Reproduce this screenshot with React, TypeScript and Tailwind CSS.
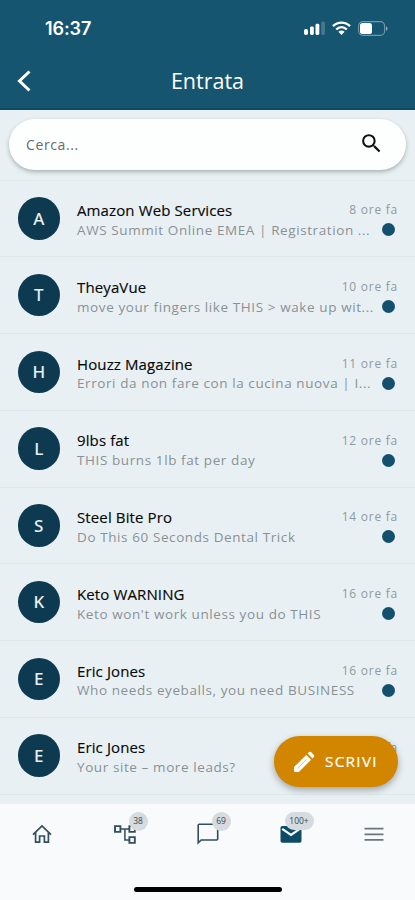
import { MdSearch } from "react-icons/md";

type Mail = {
  id: number;
  initial: string;
  sender: string;
  subject: string;
  time: string;
};

const mails: Mail[] = [
  { id: 1, initial: "A", sender: "Amazon Web Services", subject: "AWS Summit Online EMEA | Registration ...", time: "8 ore fa" },
  { id: 2, initial: "T", sender: "TheyaVue", subject: "move your fingers like THIS > wake up wit...", time: "10 ore fa" },
  { id: 3, initial: "H", sender: "Houzz Magazine", subject: "Errori da non fare con la cucina nuova | I...", time: "11 ore fa" },
  { id: 4, initial: "L", sender: "9lbs fat", subject: "THIS burns 1lb fat per day", time: "12 ore fa" },
  { id: 5, initial: "S", sender: "Steel Bite Pro", subject: "Do This 60 Seconds Dental Trick", time: "14 ore fa" },
  { id: 6, initial: "K", sender: "Keto WARNING", subject: "Keto won't work unless you do THIS", time: "16 ore fa" },
  { id: 7, initial: "E", sender: "Eric Jones", subject: "Who needs eyeballs, you need BUSINESS", time: "16 ore fa" },
  { id: 8, initial: "E", sender: "Eric Jones", subject: "Your site – more leads?", time: "16 ore fa" },
];

function StatusBar() {
  return (
    <div className="flex h-[56px] items-center justify-between pr-[27px] pl-[45px] text-white">
      <span className="font-['Inter',sans-serif] text-[18px] font-semibold tracking-[-0.1px]">16:37</span>
      <div className="flex items-center">
        <svg width="22" height="14" viewBox="0 0 22 14" fill="currentColor">
          <rect x="0" y="8" width="4" height="6" rx="1.8" />
          <rect x="6" y="5.5" width="3.8" height="8.5" rx="1.4" />
          <rect x="11.5" y="2.8" width="3.8" height="11.2" rx="1.4" />
          <rect x="17.2" y="0.5" width="3.8" height="13.5" rx="1.4" opacity="0.2" />
        </svg>
        <svg className="ml-[6px]" width="19" height="14" viewBox="0 0 19 14" fill="none" stroke="currentColor" strokeWidth="2.4">
          <path d="M1 5.2C5.8 0.4 13.2 0.4 18 5.2" />
          <path d="M4.2 8.5C7.3 5.5 11.7 5.5 14.8 8.5" />
          <path d="M9.5 14L6.4 10.8C8.2 9.2 10.8 9.2 12.6 10.8Z" fill="currentColor" stroke="none" />
        </svg>
        <svg className="ml-[7px]" width="30" height="15" viewBox="0 0 30 15">
          <rect x="0.6" y="0.6" width="26" height="13.8" rx="4.4" fill="none" stroke="#fff" strokeOpacity="0.4" strokeWidth="1.1" />
          <rect x="2" y="2" width="12" height="11" rx="2.6" fill="#fff" />
          <path d="M28 5.2C30 6 30 9 28 9.8Z" fill="#fff" fillOpacity="0.5" />
        </svg>
      </div>
    </div>
  );
}

function MailRow({ mail }: { mail: Mail }) {
  return (
    <li className="flex h-[76.75px] shrink-0 items-center border-b border-[#e0e8eb] pr-[17px] pl-[17.5px]">
      <div className="flex size-[42.5px] shrink-0 items-center justify-center rounded-full bg-[#0d3a50] font-['Noto_Sans',sans-serif] text-[17px] font-medium text-[#e8eff3]">
        {mail.initial}
      </div>
      <div className="ml-[17px] min-w-0 flex-1 pt-[3px]">
        <div className="flex h-5 items-center justify-between whitespace-nowrap">
          <span className="text-[15px] tracking-[0.12px] text-[#050708] [-webkit-text-stroke:0.15px_#050708]">
            {mail.sender}
          </span>
          <span className="text-[12px] tracking-[0.75px] text-[#91999d]">{mail.time}</span>
        </div>
        <div className="flex h-[19px] items-center justify-between whitespace-nowrap">
          <span className="text-[13.5px] tracking-[0.59px] text-[#899195]">{mail.subject}</span>
          <span className="mr-[3px] size-[13px] shrink-0 rounded-full bg-[#13506d]" />
        </div>
      </div>
    </li>
  );
}

function Badge({ label }: { label: string }) {
  return (
    <span className="absolute -top-[10px] left-[16px] flex h-[19px] min-w-[19px] items-center justify-center rounded-full bg-[#d5dbde] px-1 text-[8.5px] font-medium text-[#3c484e]">
      {label}
    </span>
  );
}

function TabBar() {
  return (
    <nav className="flex h-[96px] shrink-0 flex-col justify-between bg-[#f8fafc] pb-[8px]">
      <div className="grid grid-cols-5 pt-[18px] text-[#324f5b]">
        <div className="flex justify-center">
          <svg width="24" height="24" viewBox="0 0 24 24" fill="none" stroke="currentColor" strokeWidth="1.7">
            <path d="M3 12.6L12 4L21 12.6M5.6 10.5V20.2H9.6V14H14.4V20.2H18.4V10.5" />
          </svg>
        </div>
        <div className="flex justify-center">
          <div className="relative">
            <svg width="24" height="24" viewBox="0 0 24 24" fill="none" stroke="currentColor" strokeWidth="1.9">
              <path d="M2 4.1H7.4V9.9H2ZM16.4 4.1H21.8V9.9H16.4ZM16.4 15.1H21.8V20.9H16.4Z" />
              <path d="M7.4 7H16.4M11.9 7V18H16.4" strokeWidth="1.5" />
            </svg>
            <Badge label="38" />
          </div>
        </div>
        <div className="flex justify-center">
          <div className="relative">
            <svg width="24" height="24" viewBox="0 0 24 24" fill="none" stroke="currentColor" strokeWidth="1.6">
              <path d="M2.2 20.8V3.2Q2.2 2.3 3.2 2.3H20.7Q21.7 2.3 21.7 3.3V17Q21.7 18 20.7 18H5.2Z" />
            </svg>
            <Badge label="69" />
          </div>
        </div>
        <div className="flex justify-center">
          <div className="relative">
            <svg width="24" height="24" viewBox="0 0 24 24">
              <rect x="1.5" y="4" width="21" height="16.8" rx="1.8" fill="#0f4a66" />
              <path d="M3.2 6.8L12 12.8L20.8 6.8" fill="none" stroke="#f8fafc" strokeWidth="2.2" />
            </svg>
            <span className="absolute -top-[10px] left-[6px] flex h-[18px] w-[29px] items-center justify-center rounded-full bg-[#d5dbde] text-[8.5px] font-medium text-[#3c484e]">
              100+
            </span>
          </div>
        </div>
        <div className="flex justify-center">
          <svg width="24" height="24" viewBox="0 0 24 24" stroke="#68777f" strokeWidth="1.7">
            <path d="M2.5 6.7H21.5M2.5 12.3H21.5M2.5 17.8H21.5" />
          </svg>
        </div>
      </div>
      <div className="mx-auto h-[5px] w-[148px] rounded-full bg-black" />
    </nav>
  );
}

export default function App() {
  return (
    <div className="relative flex h-[900px] w-[415px] flex-col overflow-hidden bg-[#e9f0f3] font-['Open_Sans',sans-serif]">
      <header className="h-[110px] shrink-0 border-b-2 border-[#0d4a64] bg-[#16556f]">
        <StatusBar />
        <div className="grid h-[50px] grid-cols-[60px_1fr_60px] items-center text-white">
          <svg className="ml-[16px]" width="16" height="24" viewBox="0 0 16 24" fill="none" stroke="currentColor" strokeWidth="3">
            <path d="M13.5 2.5L3.5 12L13.5 21.5" />
          </svg>
          <h1 className="text-center text-[21.5px] font-medium">Entrata</h1>
        </div>
      </header>

      <div className="h-[70.5px] shrink-0 border-b border-[#e3eaed] px-[9px] pt-[9px]">
        <div className="flex h-[51px] items-center justify-between rounded-full bg-[#fdfefe] pr-[22px] pl-[17px] shadow-[0_2px_4px_rgba(30,50,40,0.32)]">
          <span className="text-[14px] tracking-[0.6px] text-[#666b6d]">Cerca...</span>
          <MdSearch className="relative -top-px size-[25px] text-[#111]" />
        </div>
      </div>

      <ul className="flex min-h-0 flex-1 flex-col overflow-hidden">
        {mails.map((mail) => (
          <MailRow key={mail.id} mail={mail} />
        ))}
      </ul>

      <TabBar />

      <button className="absolute top-[736px] left-[274px] flex h-[51px] w-[124px] items-center rounded-full bg-[#d28600] pl-[18px] text-white shadow-[0_3px_7px_rgba(40,50,50,0.4)]">
        <svg width="24" height="24" viewBox="0 0 24 24" fill="currentColor">
          <path d="M2 17.1L14.2 4.9L19.1 9.8L6.9 22H3Q2 22 2 21Z" />
          <path d="M15.6 3.5L17 2.1Q18 1.4 19 2.1L21.9 5Q22.6 6 21.9 7L20.5 8.4Z" />
          <path d="M5.5 18.4L14.6 9.3" stroke="#d28600" strokeWidth="0.8" strokeOpacity="0.7" />
        </svg>
        <span className="ml-[9px] text-[15.3px] font-medium tracking-[1.3px] [-webkit-text-stroke:0.2px_#fff]">SCRIVI</span>
      </button>
    </div>
  );
}
